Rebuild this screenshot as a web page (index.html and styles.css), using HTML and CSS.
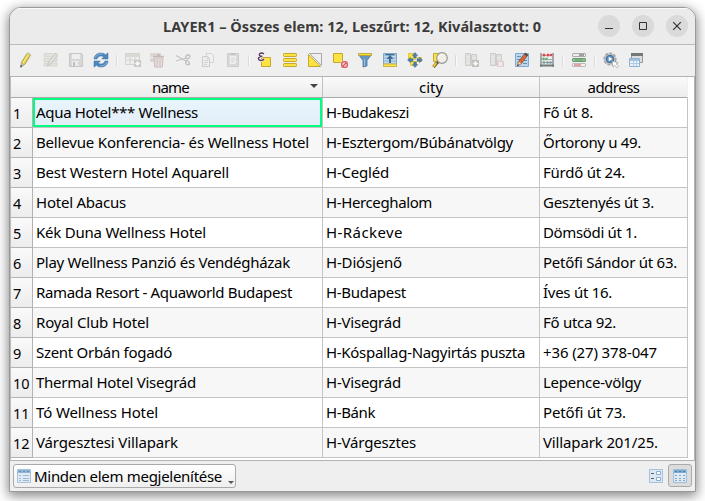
FILE: index.html
```html
<!DOCTYPE html>
<html lang="hu">
<head>
<meta charset="utf-8">
<title>LAYER1</title>
<link rel="stylesheet" href="styles.css">
</head>
<body>
<main class="window">
<header class="titlebar">
<h1><span class="fit" data-width="378">LAYER1 – Összes elem: 12, Leszűrt: 12, Kiválasztott: 0</span></h1>
<div class="controls">
<button aria-label="Kis méret"><svg viewBox="0 0 22 22"><path d="M7 13.5h8" stroke="#333"/></svg></button>
<button aria-label="Teljes méret"><svg viewBox="0 0 22 22"><path d="M7.5 7.5h7v7h-7z" fill="none" stroke="#333"/></svg></button>
<button aria-label="Bezárás"><svg viewBox="0 0 22 22"><path d="M7.2 7.2l7.6 7.6M14.8 7.2l-7.6 7.6" stroke="#333" stroke-width="1.2"/></svg></button>
</div>
</header>
<nav class="toolbar">
<svg class="tool" viewBox="0 0 16 16"><path d="M3.5 10.3L9.3 1.2l3.2 2-5.6 9.1-4.1 2.9z" fill="#e6d33f" stroke="#8d8550" stroke-width=".7"/><path d="M5 10.7l5.5-8.5" stroke="#fff39a"/><path d="M9.3 1.2l1-.9 2.9 1.9-.6 1.4z" fill="#c9c7b9"/><path d="M3.4 10.6l3.3 1.8-3.9 2.9z" fill="#bdb5a2"/><path d="M2.7 13.1l1.5 1-1.7 1.6z" fill="#333"/></svg>
<svg class="tool off" viewBox="0 0 16 16"><path d="M1 1.5h13v3.5H1zM1 6.5h13v3H1zM1 11h13v3H1z" fill="#cfcdbd" stroke="#aaa894" stroke-width=".7"/><path d="M4.5 14l1-4 7-8.5 2 2-7 8.5z" fill="#d3d0ca" stroke="#77736b" stroke-width=".8"/></svg>
<svg class="tool off" viewBox="0 0 16 16"><path d="M1.5 1.5h12l1 1v12h-13z" fill="#b6b8ba" stroke="#85888b"/><path d="M4 2h8v5H4zM4 9h7v5H4z" fill="#eee"/><path d="M5 10h2v4H5z" fill="#777"/><path d="M9 13l1-3 4-3 2 2-4 3z" fill="#bbb3a5"/></svg>
<svg class="tool" viewBox="0 0 16 16"><path d="M1 7C1.2 3 4.5 1 8 1c2 0 3.5.7 4.6 1.8L15 .8V7H8.7l2-2C8.4 3.1 4.9 3.9 4 7z" fill="#4c87bd" stroke="#3f72a6" stroke-width=".5"/><path d="M15 9c-.2 4-3.5 6-7 6-2 0-3.5-.7-4.6-1.8L1 15.2V9h6.3l-2 2c2.3 1.9 5.8 1.1 6.7-2z" fill="#4c87bd" stroke="#3f72a6" stroke-width=".5"/><path d="M2 6c1-3 4-4 7-4M14 10c-1 3-4 4-7 4" fill="none" stroke="#87b4dc"/></svg>
<i class="sep"></i>
<svg class="tool off" viewBox="0 0 16 16"><path d="M.5 1.5h14v11H.5z" fill="#eee" stroke="#aaa"/><path d="M1 2h13v3H1z" fill="#bcbca9"/><path d="M1 8h13M5 5v7M10 5v7" stroke="#aaa"/><path d="M9 8h7v7H9z" fill="#97988b"/><path d="M12.5 9v5M10 11.5h5M11 10l3 3M14 10l-3 3" stroke="#fff"/></svg>
<svg class="tool off" viewBox="0 0 16 16"><path d="M0 1h11v4H0zM0 6h4v4H0z" fill="#bcb7a9"/><path d="M3 4.5h11M7 3h3" stroke="#8f6965" stroke-width="1.5"/><path d="M4 6h9l-.7 9H4.7z" fill="#dcc3c0" stroke="#98706c"/><path d="M7 7.5v6M10 7.5v6" stroke="#98706c"/></svg>
<svg class="tool off" viewBox="0 0 16 16"><path d="M1 3.5l10 5.5M1 9l10-3" stroke="#858585" stroke-width="1.2"/><ellipse cx="12.8" cy="4.8" rx="2.3" ry="1.7" transform="rotate(-35 12.8 4.8)" fill="none" stroke="#777" stroke-width="1.3"/><ellipse cx="12.5" cy="10.8" rx="1.6" ry="2.2" transform="rotate(-30 12.5 10.8)" fill="none" stroke="#777" stroke-width="1.3"/></svg>
<svg class="tool off" viewBox="0 0 16 16"><path d="M6.5 1.5h5l2 2v7h-7z" fill="#f3f3f3" stroke="#aaa"/><path d="M2.5 4.5h5l2 2v8h-7z" fill="#eee" stroke="#999"/><path d="M7 5v2h2M4 8.5h4M4 10.5h4M4 12.5h3" fill="none" stroke="#aaa"/></svg>
<svg class="tool off" viewBox="0 0 16 16"><path d="M2.5 1.5h11v13h-11z" fill="#b6b7af" stroke="#999"/><path d="M4.5 3.5h7v7l-2 2h-5z" fill="#f4f4f4" stroke="#bbb"/><path d="M5.5 1h5v2h-5z" fill="#888"/><path d="M6 6h4M6 8h4M6 10h3" stroke="#aaa"/></svg>
<i class="sep"></i>
<svg class="tool" viewBox="0 0 16 16"><path d="M4.5 5.5h9v9h-9z" fill="#fbe343" stroke="#c4a82f"/><path d="M7 2C4.5 0 1.5 1.5 2.5 3.3c.5.9 1.5 1 2.8 1C2 4.5.7 6 1.8 7.5 3 9 5.8 8.6 7 7" fill="none" stroke="#fff" stroke-width="2.5"/><path d="M7 2C4.5 0 1.5 1.5 2.5 3.3c.5.9 1.5 1 2.8 1C2 4.5.7 6 1.8 7.5 3 9 5.8 8.6 7 7" fill="none" stroke="#593b68" stroke-width="1.4"/></svg>
<svg class="tool" viewBox="0 0 16 16"><g fill="#fbe343" stroke="#c4a82f"><rect x="1.5" y="1.5" width="13" height="3" rx=".8"/><rect x="1.5" y="6.5" width="13" height="3" rx=".8"/><rect x="1.5" y="11.5" width="13" height="3" rx=".8"/></g></svg>
<svg class="tool" viewBox="0 0 16 16"><path d="M2.5 1.5h12v12z" fill="#eee" stroke="#aaa"/><path d="M1.5 2.5v12h12z" fill="#fbe343" stroke="#c4a82f"/></svg>
<svg class="tool" viewBox="0 0 16 16"><path d="M1.5 1.5h9v9h-9z" fill="#fbe343" stroke="#c4a82f"/><path d="M9 9h7v7H9z" fill="#f6c9ca"/><circle cx="12.5" cy="12.5" r="2.9" fill="#f9dddd" stroke="#d6545b" stroke-width="1.2"/><path d="M10.5 14.5l4-4" stroke="#d6545b" stroke-width="1.2"/></svg>
<svg class="tool" viewBox="0 0 16 16"><path d="M1.5 2.5L6 8.5V15l4-1V8.5l4.5-6z" fill="#6697c2" stroke="#4d7298" stroke-width=".8"/><path d="M7.5 7v7" stroke="#9fc0dd"/><path d="M1.5 1.5h13v2h-13z" fill="#f9e13a" stroke="#b69c2c" stroke-width=".8"/></svg>
<svg class="tool" viewBox="0 0 16 16"><path d="M1.5 1.5h13v13h-13z" fill="#a3c5e4" stroke="#80a7ca"/><path d="M2 4.5h12M2 7.5h12M2 10.5h12" stroke="#c3d9ed"/><path d="M3.5 2h9v1.2h-9zM8 3l3.5 4H9v4H7V7H4.5z" fill="#416b91"/><path d="M1.5 12h13v2.5h-13z" fill="#fce545" stroke="#c8b44a"/></svg>
<svg class="tool" viewBox="0 0 16 16"><path d="M1.5 1.5h7v6h-7zM10.5 5.5h4v4h-4zM3.5 9.5h6v4h-6z" fill="#fbe343" stroke="#e2c83e"/><path d="M8 .5l2.800 3H9.300V6H6.700V3.500H5.200zM8 15.500l2.800-3H9.300V10H6.700v2.500H5.200zM.5 8l3-2.800v1.500H6v2.600H3.500v1.500zM15.500 8l-3-2.800v1.500H10v2.600h2.500v1.500z" fill="#507eaa" stroke="#426a90" stroke-width=".4"/></svg>
<svg class="tool" viewBox="0 0 16 16"><path d="M1.5 1.5h8v8h-8z" fill="#fbe343" stroke="#c4a82f"/><path d="M6 9.5L1.5 15" stroke="#806622" stroke-width="3.2"/><path d="M5.6 9.5L1.5 14.5" stroke="#f1d640" stroke-width="1.6"/><path d="M6.5 9.5L5 11.5" stroke="#444" stroke-width="2"/><circle cx="10" cy="6" r="5.3" fill="#f1eee4" stroke="#999b96" stroke-width="1.2"/><path d="M6.300 6.500c0-2.500 1.500-3.600 4-3.700" fill="none" stroke="#fff"/></svg>
<i class="sep"></i>
<svg class="tool off" viewBox="0 0 16 16"><path d="M1.5 1.5h5v12h-5zM7.500 2.500h5v11h-5z" fill="#c8c8bc" stroke="#999"/><path d="M2 5h4M2 8h4M2 11h4M8 6h4" stroke="#eee"/><path d="M8 8h7v7H8z" fill="#85867a"/><path d="M11.5 9v5M9 11.5h5M10 10l3 3M13 10l-3 3" stroke="#fff"/></svg>
<svg class="tool off" viewBox="0 0 16 16"><path d="M1.5 1.5h5v12h-5zM7.5 2.5h5v11h-5z" fill="#d0cbc8" stroke="#999"/><path d="M2 5h4M2 8h4M2 11h4M8 6h4" stroke="#eee"/><path d="M8 9h7v6H8z" fill="#c69a99"/><path d="M9.5 10l4 4M13.5 10l-4 4" stroke="#fff" stroke-width="1.4"/></svg>
<svg class="tool" viewBox="0 0 16 16"><path d="M1.5 1.5h13v13h-13z" fill="#bdd5ea" stroke="#80aace"/><path d="M3 4.5h4M3 7.5h4M3 10.5h4M9 11.5h4M10 8.5h3" stroke="#5f91be"/><path d="M3.5 14l1.300-4.800 6-7.700 2.700 2-6 7.900z" fill="#d96b38" stroke="#81472e" stroke-width=".8"/><path d="M10.200 2.300l1.300-1.600 2.700 2-1.300 1.700z" fill="#4c4c4c"/><path d="M4.800 9.500l2.500 1.800-3.700 2.500z" fill="#f0cfa0"/><path d="M3.800 12l1.200.9-1.700 1.400z" fill="#333"/></svg>
<svg class="tool" viewBox="0 0 16 16"><path d="M2 1v14M14 1v14" stroke="#8b9090" stroke-width="1.5"/><path d="M1 13.5h14" stroke="#737979" stroke-width="2"/><path d="M2 3.5h12M2 7.5h12M2 10.5h12" stroke="#a5a9a8"/><g fill="#dd4850"><circle cx="5" cy="3" r="1.5"/><circle cx="9" cy="3" r="1.5"/><circle cx="12" cy="3" r="1.3"/></g><g fill="#6cb37c"><circle cx="4.5" cy="7" r="1.4"/><circle cx="7.5" cy="7" r="1.4"/></g><g fill="#77999b"><circle cx="5" cy="10.5" r="1.3"/><circle cx="8.5" cy="10.5" r="1.3"/><circle cx="11.5" cy="10.5" r="1.3"/></g></svg>
<i class="sep"></i>
<svg class="tool" viewBox="0 0 16 16"><rect x="1.5" y="1.5" width="13" height="3" rx=".5" fill="#eee" stroke="#aaa"/><path d="M8 3h5" stroke="#555"/><rect x="1.5" y="6.5" width="13" height="3" rx=".5" fill="#8ec695" stroke="#6c9b72"/><path d="M4 8h8" stroke="#5c9a66"/><rect x="1.5" y="11.5" width="13" height="3" rx=".5" fill="#f5efef" stroke="#bbb"/><path d="M3 13h7" stroke="#d85358"/></svg>
<i class="sep"></i>
<svg class="tool" viewBox="0 0 16 16"><circle cx="7" cy="7" r="5.800" fill="#c3c6c7" stroke="#a3a8a9" stroke-width="1.6" stroke-dasharray="3 1.3"/><circle cx="7" cy="7" r="3.8" fill="#5c8dbd" stroke="#3f6c99"/><path d="M5.7 4.8v4.400L9.500 7z" fill="#fff"/><path d="M9 9l1 6 1.700-1.700 2.300 2.500 1.600-1.600-2.500-2.300 2-1.200z" fill="#fff" stroke="#999" stroke-width=".7"/></svg>
<svg class="tool" viewBox="0 0 16 16"><path d="M3.5 1.5h11v9h-11z" fill="#ddd" stroke="#969b9c"/><path d="M3 1h12v3H3z" fill="#737879"/><path d="M1.5 6.5h10v8h-10z" fill="#e9f2fa" stroke="#8db2d4"/><path d="M2 7h9v2H2z" fill="#a3c1de"/><path d="M2 11.5h9M5.5 9v5M8.5 9v5" stroke="#b3cbe2"/></svg>
</nav>
<section class="view">
<table>
<colgroup><col class="c-num"><col class="c-name"><col class="c-city"><col class="c-address"></colgroup>
<thead><tr><th colspan="2" class="sorted"><span class="fit" data-width="37">name</span></th><th><span class="fit" data-width="24">city</span></th><th><span class="fit" data-width="52">address</span></th></tr></thead>
<tbody>
<tr><th>1</th><td class="current"><span class="fit" data-width="162">Aqua Hotel*** Wellness</span></td><td><span class="fit" data-width="83">H-Budakeszi</span></td><td><span class="fit" data-width="50">Fő út 8.</span></td></tr>
<tr><th>2</th><td><span class="fit" data-width="273">Bellevue Konferencia- és Wellness Hotel</span></td><td><span class="fit" data-width="187">H-Esztergom/Búbánatvölgy</span></td><td><span class="fit" data-width="98">Őrtorony u 49.</span></td></tr>
<tr><th>3</th><td><span class="fit" data-width="193">Best Western Hotel Aquarell</span></td><td><span class="fit" data-width="63">H-Cegléd</span></td><td><span class="fit" data-width="82">Fürdő út 24.</span></td></tr>
<tr><th>4</th><td><span class="fit" data-width="90">Hotel Abacus</span></td><td><span class="fit" data-width="106">H-Herceghalom</span></td><td><span class="fit" data-width="111">Gesztenyés út 3.</span></td></tr>
<tr><th>5</th><td><span class="fit" data-width="170">Kék Duna Wellness Hotel</span></td><td><span class="fit" data-width="77">H-Ráckeve</span></td><td><span class="fit" data-width="94">Dömsödi út 1.</span></td></tr>
<tr><th>6</th><td><span class="fit" data-width="254">Play Wellness Panzió és Vendégházak</span></td><td><span class="fit" data-width="76">H-Diósjenő</span></td><td><span class="fit" data-width="134">Petőfi Sándor út 63.</span></td></tr>
<tr><th>7</th><td><span class="fit" data-width="256">Ramada Resort - Aquaworld Budapest</span></td><td><span class="fit" data-width="80">H-Budapest</span></td><td><span class="fit" data-width="69">Íves út 16.</span></td></tr>
<tr><th>8</th><td><span class="fit" data-width="113">Royal Club Hotel</span></td><td><span class="fit" data-width="75">H-Visegrád</span></td><td><span class="fit" data-width="73">Fő utca 92.</span></td></tr>
<tr><th>9</th><td><span class="fit" data-width="136">Szent Orbán fogadó</span></td><td><span class="fit" data-width="199">H-Kóspallag-Nagyirtás puszta</span></td><td><span class="fit" data-width="114">+36 (27) 378-047</span></td></tr>
<tr><th>10</th><td><span class="fit" data-width="160">Thermal Hotel Visegrád</span></td><td><span class="fit" data-width="75">H-Visegrád</span></td><td><span class="fit" data-width="98">Lepence-völgy</span></td></tr>
<tr><th>11</th><td><span class="fit" data-width="122">Tó Wellness Hotel</span></td><td><span class="fit" data-width="49">H-Bánk</span></td><td><span class="fit" data-width="83">Petőfi út 73.</span></td></tr>
<tr><th>12</th><td><span class="fit" data-width="142">Várgesztesi Villapark</span></td><td><span class="fit" data-width="90">H-Várgesztes</span></td><td><span class="fit" data-width="115">Villapark 201/25.</span></td></tr>
</tbody>
</table>
</section>
<footer class="status">
<button class="filter"><svg viewBox="0 0 14 14"><path d="M.5.5h13v13H.5z" fill="#dfeaf4" stroke="#a9c1d8"/><path d="M1 1h12v3H1z" fill="#8fb5d8"/><path d="M2 2.5h2M6 2.5h2M10 2.5h2" stroke="#5f8db9"/><path d="M2 6.5h2M6 6.5h6M2 9.5h2M6 9.5h6M2 11.5h2M6 11.5h6" stroke="#9db9d2"/></svg><span class="fit" data-width="188">Minden elem megjelenítése</span><i class="drop"></i></button>
<div class="modes">
<button aria-label="Űrlap nézet"><svg viewBox="0 0 14 14"><path d="M.5.5h13v13H.5z" fill="#dce9f4" stroke="#a6c1d9"/><path d="M2 4.5h3M2 9.5h3" stroke="#536575"/><path d="M7.5 2.5h4v3h-4zM7.5 8.5h4v3h-4z" fill="#fff" stroke="#88add0"/></svg></button>
<button class="active" aria-label="Táblázat nézet"><svg viewBox="0 0 14 14"><path d="M.5.5h13v13H.5z" fill="#dfeaf5" stroke="#a0bfdb"/><path d="M1 1h12v3H1z" fill="#7faad2"/><path d="M2 2.5h2M6 2.5h2M10 2.5h2" stroke="#4a7fb3"/><path d="M2 6.5h2M6 6.5h2M10 6.5h2M2 9.5h2M6 9.5h2M10 9.5h2M2 11.5h2M6 11.5h2M10 11.5h2" stroke="#7fa5c9"/></svg></button>
</div>
</footer>
</main>
<script src="fit.js"></script>
</body>
</html>
```
FILE: fit.js
```js
// Tracks each label so that it fills its intended width.
document.querySelectorAll('.fit').forEach(function (el) {
  var delta = Number(el.dataset.width) - el.getBoundingClientRect().width;
  el.style.letterSpacing = (delta / el.textContent.length) + 'px';
});
```
FILE: styles.css
```css
* { box-sizing: border-box; }
body {
  margin: 0;
  padding: 7px 9px 9px;
  height: 501px;
  overflow: hidden;
  background: #fff;
  color: #000;
  font: 15px/20px "Noto Sans", "Open Sans", sans-serif;
}
button { font: inherit; color: inherit; padding: 0; border: 0; }
.window {
  display: flex;
  flex-direction: column;
  width: 687px;
  height: 485px;
  border: 1px solid #999;
  border-radius: 12px 12px 0 0;
  background: #efefef;
  box-shadow: 0 3px 12px 1px rgba(0, 0, 0, .48);
  overflow: hidden;
}
.titlebar {
  display: grid;
  grid-template-columns: 1fr auto;
  align-items: center;
  height: 37px;
  flex: none;
  padding: 0 7px 0 153px;
  background: #ebebeb;
  border-bottom: 1px solid #bbb;
  box-shadow: inset 0 1px #fafafa;
}
.titlebar h1 { margin: 0; font-size: 14.5px; font-weight: 700; color: #3b3b3b; white-space: nowrap; }
.controls { display: flex; gap: 12px; }
.controls button { width: 22px; height: 22px; border-radius: 50%; background: #dadada; }
.controls svg, .modes svg { display: block; }
.toolbar {
  display: flex;
  align-items: center;
  height: 31px;
  flex: none;
  padding: 0 0 1px 4px;
}
.tool { width: 16px; height: 16px; margin: 0 5px 0 4px; flex: none; }
.off { opacity: .4; }
.sep { width: 2px; height: 11px; margin: 0 3px 0 2px; background: #dadada; border-right: 1px solid #fafafa; }
.view {
  height: 385px;
  flex: none;
  background: #fff;
  border: 1px solid #b3b3b3;
  border-left-color: #bbb;
}
table { table-layout: fixed; width: 677px; border-collapse: separate; border-spacing: 0; }
.c-num { width: 22px; }
.c-name { width: 290px; }
.c-city { width: 217px; }
.c-address { width: 148px; }
thead th {
  height: 21px;
  padding: 0;
  line-height: 18px;
  background: linear-gradient(#fafafa, #ececec);
  border-right: 1px solid #c2c2c2;
  border-bottom: 1px solid #aaa;
  font-weight: 400;
}
thead th:last-child { border-right-color: #f1f1f1; }
.sorted { position: relative; }
thead .sorted { padding-left: 8px; }
.sorted::after {
  content: "";
  position: absolute;
  top: 7px;
  right: 4px;
  border: 4px solid transparent;
  border-top-color: #444;
  border-bottom: 0;
}
tbody th, td {
  height: 30px;
  padding: 0 0 2px 3px;
  border-right: 1px solid #c4c4c4;
  border-bottom: 1px solid #c4c4c4;
  font-weight: 400;
  text-align: left;
  white-space: nowrap;
}
tbody th {
  padding: 1px 0 0 2px;
  background: linear-gradient(#fafafa, #ececec);
  border-color: #b3b3b3;
  font-size: 14.5px;
}
tbody tr:nth-child(even) td { background: #f7f7f7; }
td.current {
  background: linear-gradient(#e9f4fc, #e2eef8);
  box-shadow: inset 0 0 0 2px #00ff80;
}
.fit { display: inline-block; white-space: nowrap; }
.status { display: flex; flex: 1; justify-content: space-between; padding: 3px 3px 2px 3px; }
.filter {
  display: flex;
  align-items: center;
  width: 223px;
  height: 24px;
  padding-left: 3px;
  border: 1px solid #aaa;
  border-radius: 3px;
  background: linear-gradient(#fff, #efefef);
}
.filter svg { width: 14px; height: 14px; margin-right: 3px; flex: none; }
.drop { margin: 13px 0 0 6px; border: 3px solid transparent; border-top-color: #555; border-bottom: 0; }
.modes { display: flex; }
.modes button { display: grid; place-items: center; width: 24px; height: 23px; background: none; border-radius: 3px; }
.modes button.active { background: #dcdcdc; border: 1px solid #aaa; }
.modes svg { width: 14px; height: 14px; }
```
